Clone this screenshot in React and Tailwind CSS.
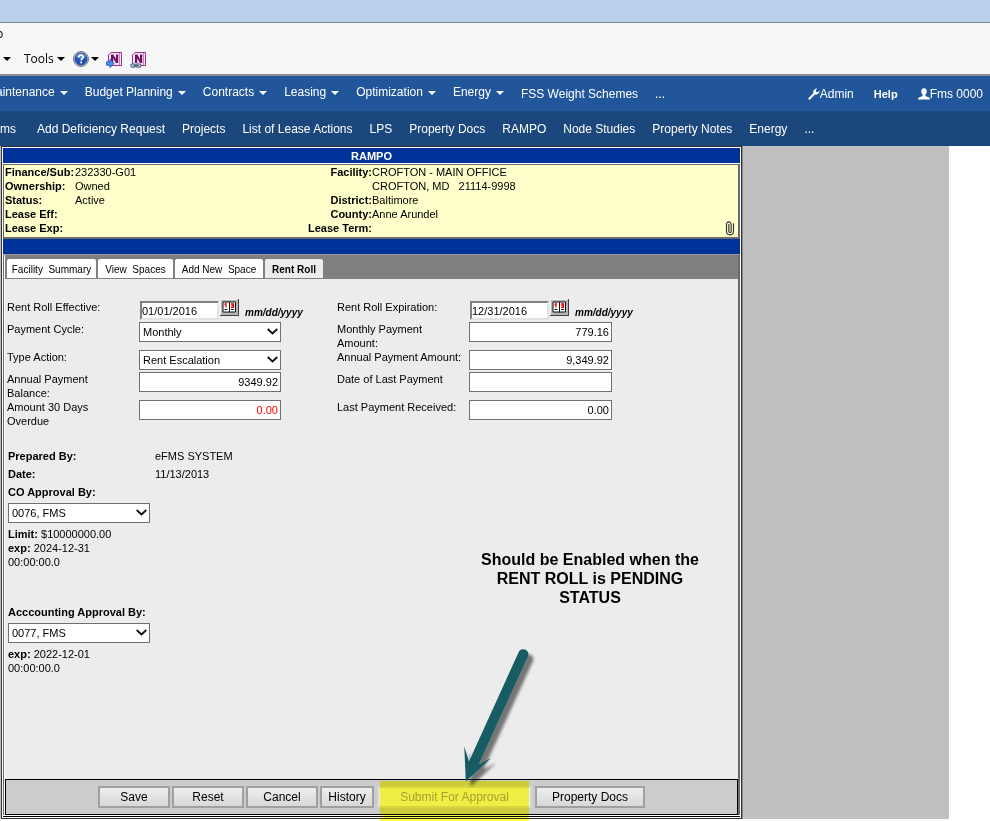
import { LuPaperclip } from "react-icons/lu";

const MENUS = ["aintenance", "Budget Planning", "Contracts", "Leasing", "Optimization", "Energy"];
const LINKS = [
  "Add Deficiency Request",
  "Projects",
  "List of Lease Actions",
  "LPS",
  "Property Docs",
  "RAMPO",
  "Node Studies",
  "Property Notes",
  "Energy",
  "...",
];
const FACILITY = [
  ["Finance/Sub:", "232330-G01", "Facility:", "CROFTON - MAIN OFFICE"],
  ["Ownership:", "Owned", "", "CROFTON, MD   21114-9998"],
  ["Status:", "Active", "District:", "Baltimore"],
  ["Lease Eff:", "", "County:", "Anne Arundel"],
  ["Lease Exp:", "", "Lease Term:", ""],
];
const TABS = [
  { label: "Facility  Summary", size: "w-[89px]" },
  { label: "View  Spaces", size: "w-[75px]" },
  { label: "Add New  Space", size: "w-[88px]" },
];

function Caret({ className = "" }) {
  return (
    <svg width="8" height="4" viewBox="0 0 8 4" className={className} aria-hidden="true">
      <path d="M0 0h8L4 4z" fill="currentColor" />
    </svg>
  );
}

function WrenchIcon() {
  return (
    <svg width="12" height="12" viewBox="0 0 12 12" aria-hidden="true">
      <path d="M0.300 10.200L5.300 5.300C4.800 3 6.500 0.400 9.300 0.600L7.700 2.300 8.200 3.800 9.700 4.200 11.500 2.600C11.700 5.400 9.300 7.200 6.900 6.600L1.900 11.700C1.300 12 0 11 0.300 10.200z" fill="#fff" />
    </svg>
  );
}

function UserIcon() {
  return (
    <svg width="12" height="12" viewBox="0 0 12 12" aria-hidden="true">
      <path d="M6 0.200C8 0.200 8.800 1.600 8.800 3.300 8.800 4.900 8.200 5.800 7.400 6.600V7.900L11 9.500C11.800 9.900 12 10.400 12 11.500H0C0 10.400 0.200 9.900 1 9.500L4.600 7.900V6.600C3.800 5.800 3.200 4.900 3.200 3.300 3.200 1.600 4 0.200 6 0.200z" fill="#fff" />
    </svg>
  );
}

function HelpIcon() {
  return (
    <svg width="16" height="16" viewBox="0 0 16 16" aria-hidden="true">
      <circle cx="8" cy="8" r="7.5" fill="#c9ccd4" stroke="#73777f" />
      <circle cx="8" cy="8" r="6" fill="#2454b8" stroke="#173c86" strokeWidth="0.8" />
      <path d="M3 6a5.3 5.3 0 0 1 10 0c-3 2-7 2-10 0z" fill="#5f8ae0" />
      <path d="M5.8 6.3C5.8 3.4 10.3 3.5 10.2 6c0 1.5-2 1.7-2.1 3.4" fill="none" stroke="#fff" strokeWidth="1.6" />
      <rect x="7.3" y="10.6" width="1.7" height="1.7" fill="#fff" />
    </svg>
  );
}

function NoteIcon({ linked }) {
  return (
    <svg width="17" height="17" viewBox="0 0 17 17" aria-hidden="true">
      <path d="M5 1.500h10.500v13H2.500V4z" fill="#f3e3f1" stroke="#9b2f97" />
      <path d="M13.500 2v12" stroke="#c77fc3" />
      <path d="M5 12V3.500h2.300l2.700 4.700v-4.700h2.200V12h-2.200L7.200 7.300V12z" fill="#6d1560" />
      {linked ? (
        <g fill="none" stroke="#5b6f8c" strokeWidth="1.2">
          <ellipse cx="3.300" cy="14.500" rx="2.500" ry="1.700" fill="#dfe7f0" />
          <ellipse cx="8.500" cy="14.500" rx="2.500" ry="1.700" fill="#dfe7f0" />
          <path d="M3 14.500h6" />
        </g>
      ) : (
        <path d="M0.500 10.800h3.500V8.300l4 4.200-4 4.200v-2.500H0.500z" fill="#4d8fe8" stroke="#1f5ab8" strokeWidth="0.8" />
      )}
    </svg>
  );
}

function CalendarIcon() {
  return (
    <svg width="19" height="17" viewBox="0 0 19 17" aria-hidden="true">
      <rect width="19" height="17" fill="#404040" />
      <rect width="18" height="16" fill="#f4f4f4" />
      <rect x="1" y="1" width="17" height="15" fill="#b4b4b4" />
      <path d="M3 3h12.500v10H3z" fill="#fff" stroke="#111" />
      <path d="M9.500 3v10.500" stroke="#111" />
      <path d="M4.500 5.500L6 4.500V8.500M11 5h2.500v3.300H11M11.500 6.600h2" fill="none" stroke="#e80000" strokeWidth="1.3" />
      <path d="M4.500 10.500h3M11 10.500h3" stroke="#111" />
    </svg>
  );
}

function SelectBox({ id, value }) {
  return (
    <div className="relative h-5 w-[142px]">
      <select
        id={id}
        defaultValue={value}
        className="block h-5 w-full appearance-none border border-[#707070] bg-white pl-[3px] text-[11px] leading-[18px]"
      >
        <option>{value}</option>
      </select>
      <svg width="11" height="7" viewBox="0 0 11 7" className="pointer-events-none absolute top-[6px] right-[3px]" aria-hidden="true">
        <path d="M0.700 1L5.500 5.500 10.300 1" fill="none" stroke="#111" strokeWidth="1.8" />
      </svg>
    </div>
  );
}

function AmountBox({ id, value, size = "w-[143px]", color = "text-black" }) {
  return (
    <input
      id={id}
      defaultValue={value}
      className={"block h-5 border border-[#707070] bg-white pr-[2px] text-right text-[11px] " + size + " " + color}
    />
  );
}

function DateBox({ id, value }) {
  return (
    <div className="flex items-start pl-px">
      <input
        id={id}
        defaultValue={value}
        className="mt-px h-[19px] w-[79px] border-2 border-t-[#808080] border-r-[#e3e3e3] border-b-[#e3e3e3] border-l-[#808080] bg-white text-[11px]"
      />
      <button type="button" aria-label="Pick a date" className="-mt-px ml-px">
        <CalendarIcon />
      </button>
      <span className="mt-[6px] ml-[6px] text-[10px] leading-[14px] font-bold italic">mm/dd/yyyy</span>
    </div>
  );
}

function FooterButton({ size, children }) {
  return (
    <button
      type="button"
      className={"h-[22px] border-2 border-[#a0a0a0] bg-linear-to-b from-[#eeeeee] to-[#d8d8d8] text-center text-[12px] leading-[18px] whitespace-nowrap " + size}
    >
      {children}
    </button>
  );
}

export default function App() {
  return (
    <div className="overflow-hidden bg-white pb-[2px] font-['Liberation_Sans',Arial,sans-serif] text-[11px] leading-[14px] text-black">
      <div className="h-[23px] border-b border-[#6d8494] bg-[#bad0ea]" />
      <div className="flex h-[53px] flex-col border-b-2 border-[#8c8c8c] bg-[#f7f7f7] font-['Open_Sans','Noto_Sans',sans-serif] text-[12px]">
        <div className="flex h-[22px] items-center">
          <span className="-ml-1">p</span>
        </div>
        <div className="flex h-7 items-center">
          <Caret className="ml-[3px]" />
          <button type="button" className="ml-[13px] flex items-center gap-[3px]">
            Tools <Caret />
          </button>
          <button type="button" aria-label="Help" className="ml-2 flex items-center gap-[2px]">
            <HelpIcon /> <Caret />
          </button>
          <button type="button" aria-label="Send to notes" className="ml-[7px]">
            <NoteIcon />
          </button>
          <button type="button" aria-label="Linked notes" className="ml-[7px]">
            <NoteIcon linked />
          </button>
        </div>
      </div>

      <nav className="flex h-[35px] items-center gap-[17px] bg-[#22569b] pr-[7px] text-[12px] whitespace-nowrap text-white">
        {MENUS.map((menu, i) => (
          <button key={menu} type="button" className={"flex items-center gap-[5px] pb-1 " + (i === 0 ? "-ml-1" : "")}>
            {menu}
            <Caret className="mt-[3px]" />
          </button>
        ))}
        <a href="#fss">FSS Weight Schemes</a>
        <a href="#more">...</a>
        <div className="ml-auto flex items-center gap-5">
          <a href="#admin" className="flex items-center">
            <WrenchIcon />
            Admin
          </a>
          <a href="#help" className="text-[11px] font-bold">Help</a>
          <a href="#user" className="flex items-center">
            <UserIcon />
            Fms 0000
          </a>
        </div>
      </nav>
      <nav className="flex h-[35px] items-center gap-[17px] bg-[#1c477d] text-[12px] whitespace-nowrap text-white">
        <a href="#page" className="pr-1">ms</a>
        {LINKS.map((link) => (
          <a key={link} href="#page">
            {link}
          </a>
        ))}
      </nav>

      <main className="mr-[41px] flex bg-[#c0c0c0] pl-px">
        <div className="relative w-full max-w-[742px] border-r border-[#888888]">
          <div className="border border-[#333333] bg-white p-px">
            <h1 className="mb-px h-[15px] bg-[#003399] text-center text-[11px] leading-[16px] font-bold text-white">RAMPO</h1>
            <section className="relative border-t border-r-2 border-b-2 border-l border-[#6a6a6a] bg-[#ffffcc] pb-[2px] pl-px">
              {FACILITY.map(([a, b, c, d]) => (
                <div key={a} className="grid grid-cols-[70px_229px_68px_1fr] whitespace-pre">
                  <b>{a}</b>
                  <span>{b}</span>
                  <b className="flex justify-end">{c}</b>
                  <span>{d}</span>
                </div>
              ))}
              <LuPaperclip size={14} strokeWidth={2} className="absolute right-px bottom-[2px] -rotate-45 text-[#333333]" />
            </section>
            <div className="h-4 border-b border-[#999999] bg-[#003399]" />

            <div className="border-r-2 border-l border-[#6a6a6a] pl-px">
              <div role="tablist" className="flex h-6 items-end gap-[2px] bg-[#808080] pb-px pl-[2px] text-[10px]">
                {TABS.map((tab) => (
                  <button
                    key={tab.label}
                    type="button"
                    role="tab"
                    className={"h-[19px] rounded-t-[2px] bg-white pt-[2px] text-center whitespace-pre " + tab.size}
                  >
                    {tab.label}
                  </button>
                ))}
                <button type="button" role="tab" aria-selected="true" className="h-[19px] w-[58px] rounded-t-[2px] bg-[#ececec] pt-[2px] font-bold">
                  Rent Roll
                </button>
              </div>

              <form className="min-h-[500px] bg-[#ececec] pt-[21px] pl-[2px]">
                <div className="grid grid-cols-[132px_198px_132px_1fr] grid-rows-[22px_28px_22px_28px_28px] items-start whitespace-nowrap">
                  <label htmlFor="effective">Rent Roll Effective:</label>
                  <DateBox id="effective" value="01/01/2016" />
                  <label htmlFor="expiration">Rent Roll Expiration:</label>
                  <DateBox id="expiration" value="12/31/2016" />

                  <label htmlFor="cycle">Payment Cycle:</label>
                  <SelectBox id="cycle" value="Monthly" />
                  <label htmlFor="monthly">
                    Monthly Payment
                    <br />
                    Amount:
                  </label>
                  <AmountBox id="monthly" value="779.16" />

                  <label htmlFor="action">Type Action:</label>
                  <SelectBox id="action" value="Rent Escalation" />
                  <label htmlFor="annual">Annual Payment Amount:</label>
                  <AmountBox id="annual" value="9,349.92" />

                  <label htmlFor="balance">
                    Annual Payment
                    <br />
                    Balance:
                  </label>
                  <AmountBox id="balance" value="9349.92" size="w-[142px]" />
                  <label htmlFor="lastdate">Date of Last Payment</label>
                  <AmountBox id="lastdate" value="" />

                  <label htmlFor="overdue">
                    Amount 30 Days
                    <br />
                    Overdue
                  </label>
                  <AmountBox id="overdue" value="0.00" size="w-[142px]" color="text-[#ff0000]" />
                  <label htmlFor="received">Last Payment Received:</label>
                  <AmountBox id="received" value="0.00" />
                </div>

                <div className="mt-[19px] ml-px grid grid-cols-[147px_1fr] leading-[18px]">
                  <b>Prepared By:</b>
                  <span>eFMS SYSTEM</span>
                  <b>Date:</b>
                  <span>11/13/2013</span>
                </div>
                <div className="ml-px flex flex-col">
                  <label htmlFor="co" className="mb-[2px] leading-[18px] font-bold">CO Approval By:</label>
                  <SelectBox id="co" value="0076, FMS" />
                  <p className="mt-1"><b>Limit:</b> $10000000.00</p>
                  <p><b>exp:</b> 2024-12-31</p>
                  <p>00:00:00.0</p>
                  <label htmlFor="accounting" className="mt-[34px] mb-[2px] leading-[18px] font-bold">Acccounting Approval By:</label>
                  <SelectBox id="accounting" value="0077, FMS" />
                  <p className="mt-1"><b>exp:</b> 2022-12-01</p>
                  <p>00:00:00.0</p>
                </div>
              </form>

              <footer className="mb-px flex h-9 items-center gap-[2px] border border-black bg-[#cccccc] pl-[92px]">
                <FooterButton size="w-[72px]">Save</FooterButton>
                <FooterButton size="w-[72px]">Reset</FooterButton>
                <FooterButton size="w-[72px]">Cancel</FooterButton>
                <FooterButton size="w-[54px]">History</FooterButton>
                <button type="button" disabled className="ml-px h-[22px] w-[155px] border-2 border-[#d6d6d6] bg-[#eeeeee] text-[12px] leading-[18px] whitespace-nowrap text-[#a3a39a]">
                  Submit For Approval
                </button>
                <FooterButton size="ml-px w-[110px]">Property Docs</FooterButton>
              </footer>
            </div>
            <div className="border-t border-black" />
          </div>

          <div className="absolute top-[635px] left-[379px] h-10 w-[149px] bg-[#ffff4a] mix-blend-multiply" />
          <p className="absolute top-[404px] left-[474px] w-[230px] text-center text-[16px] leading-[19px] font-bold">
            Should be Enabled when the RENT ROLL is PENDING STATUS
          </p>
          <svg width="86" height="150" viewBox="0 0 86 150" className="absolute top-[496px] left-[455px]" aria-hidden="true">
            <defs>
              <filter id="shade" x="-20%" y="-20%" width="150%" height="150%">
                <feDropShadow dx="5" dy="5" stdDeviation="1.6" floodColor="#000" floodOpacity="0.5" />
              </filter>
            </defs>
            <path
              d="M62.500 10.500a5 5 0 0 1 9.600 3.500L22.500 122.500 35 116 9.800 139.500 8.300 104.500 13 119.500z"
              fill="#125c62"
              filter="url(#shade)"
            />
          </svg>
        </div>
      </main>
    </div>
  );
}
